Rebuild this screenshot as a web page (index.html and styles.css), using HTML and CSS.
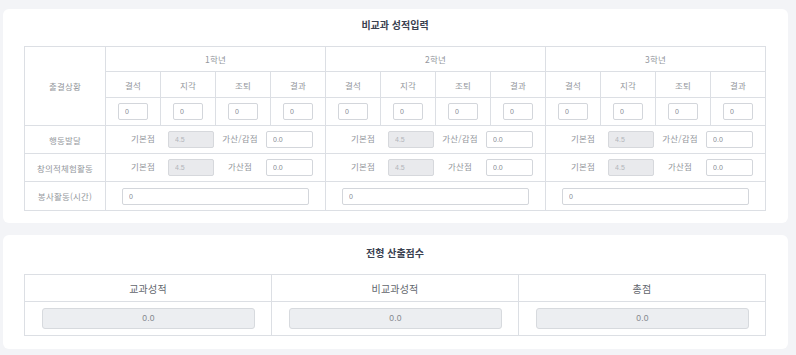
FILE: index.html
```html
<!DOCTYPE html>
<html lang="ko">
<head>
<meta charset="utf-8">
<link rel="stylesheet" href="styles.css">
</head>
<body>
<section class="card card-top">
  <h2 class="card-title">비교과 성적입력</h2>
  <table class="grid">
    <colgroup>
      <col class="col-label">
      <col class="col-sub"><col class="col-sub"><col class="col-sub"><col class="col-sub">
      <col class="col-sub"><col class="col-sub"><col class="col-sub"><col class="col-sub">
      <col class="col-sub"><col class="col-sub"><col class="col-sub"><col class="col-sub">
    </colgroup>
    <tr class="r-year">
      <th rowspan="3" class="rowhead">출결상황</th>
      <th colspan="4">1학년</th>
      <th colspan="4">2학년</th>
      <th colspan="4">3학년</th>
    </tr>
    <tr class="r-sub">
      <th>결석</th><th>지각</th><th>조퇴</th><th>결과</th>
      <th>결석</th><th>지각</th><th>조퇴</th><th>결과</th>
      <th>결석</th><th>지각</th><th>조퇴</th><th>결과</th>
    </tr>
    <tr class="r-inp">
      <td><input class="inp small" value="0"></td><td><input class="inp small" value="0"></td><td><input class="inp small" value="0"></td><td><input class="inp small" value="0"></td>
      <td><input class="inp small" value="0"></td><td><input class="inp small" value="0"></td><td><input class="inp small" value="0"></td><td><input class="inp small" value="0"></td>
      <td><input class="inp small" value="0"></td><td><input class="inp small" value="0"></td><td><input class="inp small" value="0"></td><td><input class="inp small" value="0"></td>
    </tr>
    <tr class="r-score">
      <th class="rowhead">행동발달</th>
      <td colspan="4"><div class="pair"><span class="lbl">기본점</span><input class="inp dis" value="4.5" disabled><span class="lbl">가산/감점</span><input class="inp" value="0.0"></div></td>
      <td colspan="4"><div class="pair"><span class="lbl">기본점</span><input class="inp dis" value="4.5" disabled><span class="lbl">가산/감점</span><input class="inp" value="0.0"></div></td>
      <td colspan="4"><div class="pair"><span class="lbl">기본점</span><input class="inp dis" value="4.5" disabled><span class="lbl">가산/감점</span><input class="inp" value="0.0"></div></td>
    </tr>
    <tr class="r-score">
      <th class="rowhead">창의적체험활동</th>
      <td colspan="4"><div class="pair"><span class="lbl">기본점</span><input class="inp dis" value="4.5" disabled><span class="lbl">가산점</span><input class="inp" value="0.0"></div></td>
      <td colspan="4"><div class="pair"><span class="lbl">기본점</span><input class="inp dis" value="4.5" disabled><span class="lbl">가산점</span><input class="inp" value="0.0"></div></td>
      <td colspan="4"><div class="pair"><span class="lbl">기본점</span><input class="inp dis" value="4.5" disabled><span class="lbl">가산점</span><input class="inp" value="0.0"></div></td>
    </tr>
    <tr class="r-vol">
      <th class="rowhead">봉사활동(시간)</th>
      <td colspan="4"><input class="inp wide" value="0"></td>
      <td colspan="4"><input class="inp wide" value="0"></td>
      <td colspan="4"><input class="inp wide" value="0"></td>
    </tr>
  </table>
</section>

<section class="card card-bottom">
  <h2 class="card-title">전형 산출점수</h2>
  <table class="grid totals">
    <tr class="t-head">
      <th>교과성적</th><th>비교과성적</th><th>총점</th>
    </tr>
    <tr class="t-val">
      <td><div class="box">0.0</div></td>
      <td><div class="box">0.0</div></td>
      <td><div class="box">0.0</div></td>
    </tr>
  </table>
</section>
</body>
</html>
```

FILE: styles.css
```css
* { box-sizing: border-box; }

html, body {
  margin: 0;
  padding: 0;
  background: #f3f4f7;
}

body {
  font-family: "Noto Sans CJK KR", "Noto Sans", sans-serif;
  color: #94979d;
  padding: 9px 0 0 3px;
}

.card {
  width: 785px;
  background: #ffffff;
  border-radius: 6px;
  padding: 6px 22px 12px 21px;
}

.card-bottom {
  margin-top: 12px;
  padding-top: 8px;
  padding-bottom: 13px;
}

.card-title {
  margin: 0 0 11px;
  height: 20px;
  line-height: 20px;
  text-align: center;
  font-size: 10px;
  font-weight: 700;
  color: #3a4150;
}

.grid {
  width: 742px;
  border-collapse: collapse;
  table-layout: fixed;
}

.grid th,
.grid td {
  border: 1px solid #dcdfe4;
  padding: 0;
  text-align: center;
  vertical-align: middle;
  font-weight: 400;
  font-size: 8.5px;
  color: #94979d;
  letter-spacing: 0.2px;
}

.col-label { width: 81px; }
.col-sub { width: 55px; }

.r-year th { height: 25px; }
.r-sub th { height: 26px; }
.r-inp td { height: 28px; }
.r-score th, .r-score td { height: 28px; }
.r-vol th, .r-vol td { height: 29px; }
.r-score:last-of-type th { height: 29px; }

.rowhead { color: #94979d; }

.inp {
  display: block;
  height: 17px;
  border: 1px solid #d3d6db;
  border-radius: 2px;
  background: #ffffff;
  font-family: "Liberation Sans", Arial, sans-serif;
  font-size: 7px;
  color: #878b92;
  padding: 0 0 0 6px;
  outline: none;
}

.small {
  width: 30px;
  margin: 0 auto;
}

.dis {
  background: #e9eaed;
  border-color: #d6d8dc;
  color: #b3b6bb;
}

.wide {
  width: 187px;
  margin: 0 auto;
}

.pair {
  display: grid;
  grid-template-columns: 50px 46px 52px 47px;
  align-items: center;
  padding-left: 12px;
}

.pair .inp { width: 100%; }

.lbl {
  text-align: center;
  font-size: 8.5px;
  color: #94979d;
  padding-bottom: 4px;
}

.totals .t-head th {
  height: 27px;
  font-size: 10px;
  color: #62666d;
}

.totals .t-val td {
  height: 34px;
  padding: 0 16px 0 17px;
}

.box {
  height: 21px;
  line-height: 19px;
  border: 1px solid #d7dade;
  border-radius: 3px;
  background: #eceef1;
  font-family: "Liberation Sans", Arial, sans-serif;
  font-size: 8.5px;
  color: #83878d;
  text-align: center;
}
```
